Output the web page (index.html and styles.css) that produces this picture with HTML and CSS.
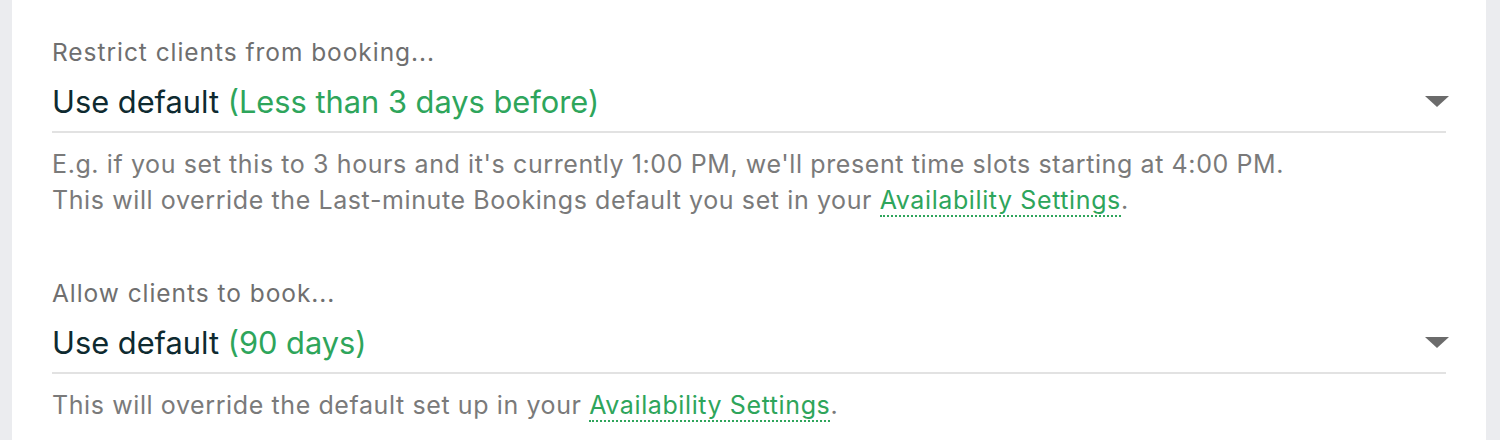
FILE: index.html
```html
<!DOCTYPE html>
<html lang="en">
<head>
<meta charset="utf-8">
<title>Booking restrictions</title>
<link rel="stylesheet" href="styles.css">
</head>
<body>
<div class="card">
  <div class="field">
    <div class="label">Restrict clients from booking...</div>
    <div class="select">
      <span class="value">Use default <span class="hint">(Less than 3 days before)</span></span>
      <span class="arrow"></span>
    </div>
    <div class="help">
      <div>E.g. if you set this to 3 hours and it's currently 1:00 PM, we'll present time slots starting at 4:00 PM.</div>
      <div>This will override the Last-minute Bookings default you set in your <a class="link" href="#">Availability Settings</a>.</div>
    </div>
  </div>
  <div class="field field-second">
    <div class="label">Allow clients to book...</div>
    <div class="select">
      <span class="value">Use default <span class="hint">(90 days)</span></span>
      <span class="arrow"></span>
    </div>
    <div class="help">
      <div>This will override the default set up in your <a class="link" href="#">Availability Settings</a>.</div>
    </div>
  </div>
</div>
</body>
</html>
```

FILE: styles.css
```css
html, body {
  margin: 0;
  padding: 0;
}
body {
  background: #ebecef;
  font-family: Inter, "Noto Sans", "Liberation Sans", sans-serif;
  height: 440px;
  overflow: hidden;
}
.card {
  background: #ffffff;
  margin: 0 14px 0 12px;
  padding: 37px 40px 0 40px;
  height: 440px;
  box-sizing: border-box;
}
.field-second {
  margin-top: 60px;
}
.label {
  font-size: 24.5px;
  font-weight: 400;
  letter-spacing: 0.95px;
  line-height: 30px;
  color: #6f6f6f;
}
.select {
  margin-top: 15px;
  display: flex;
  align-items: center;
  justify-content: space-between;
  padding-bottom: 9px;
  border-bottom: 2px solid #e2e2e2;
}
.value {
  font-size: 30.8px;
  line-height: 40px;
  color: #0e2a30;
}
.hint {
  color: #2ea55b;
}
.arrow {
  width: 0;
  height: 0;
  border-left: 12.5px solid transparent;
  border-right: 12.5px solid transparent;
  border-top: 11px solid #6b6b6b;
  margin-right: -3px;
  margin-top: -2px;
}
.help {
  margin-top: 13px;
  font-size: 25px;
  letter-spacing: 0.6px;
  line-height: 36px;
  color: #7a7a7a;
}
.link {
  color: #2ea55b;
  text-decoration: none;
  border-bottom: 2px dotted #2ea55b;
}
```
